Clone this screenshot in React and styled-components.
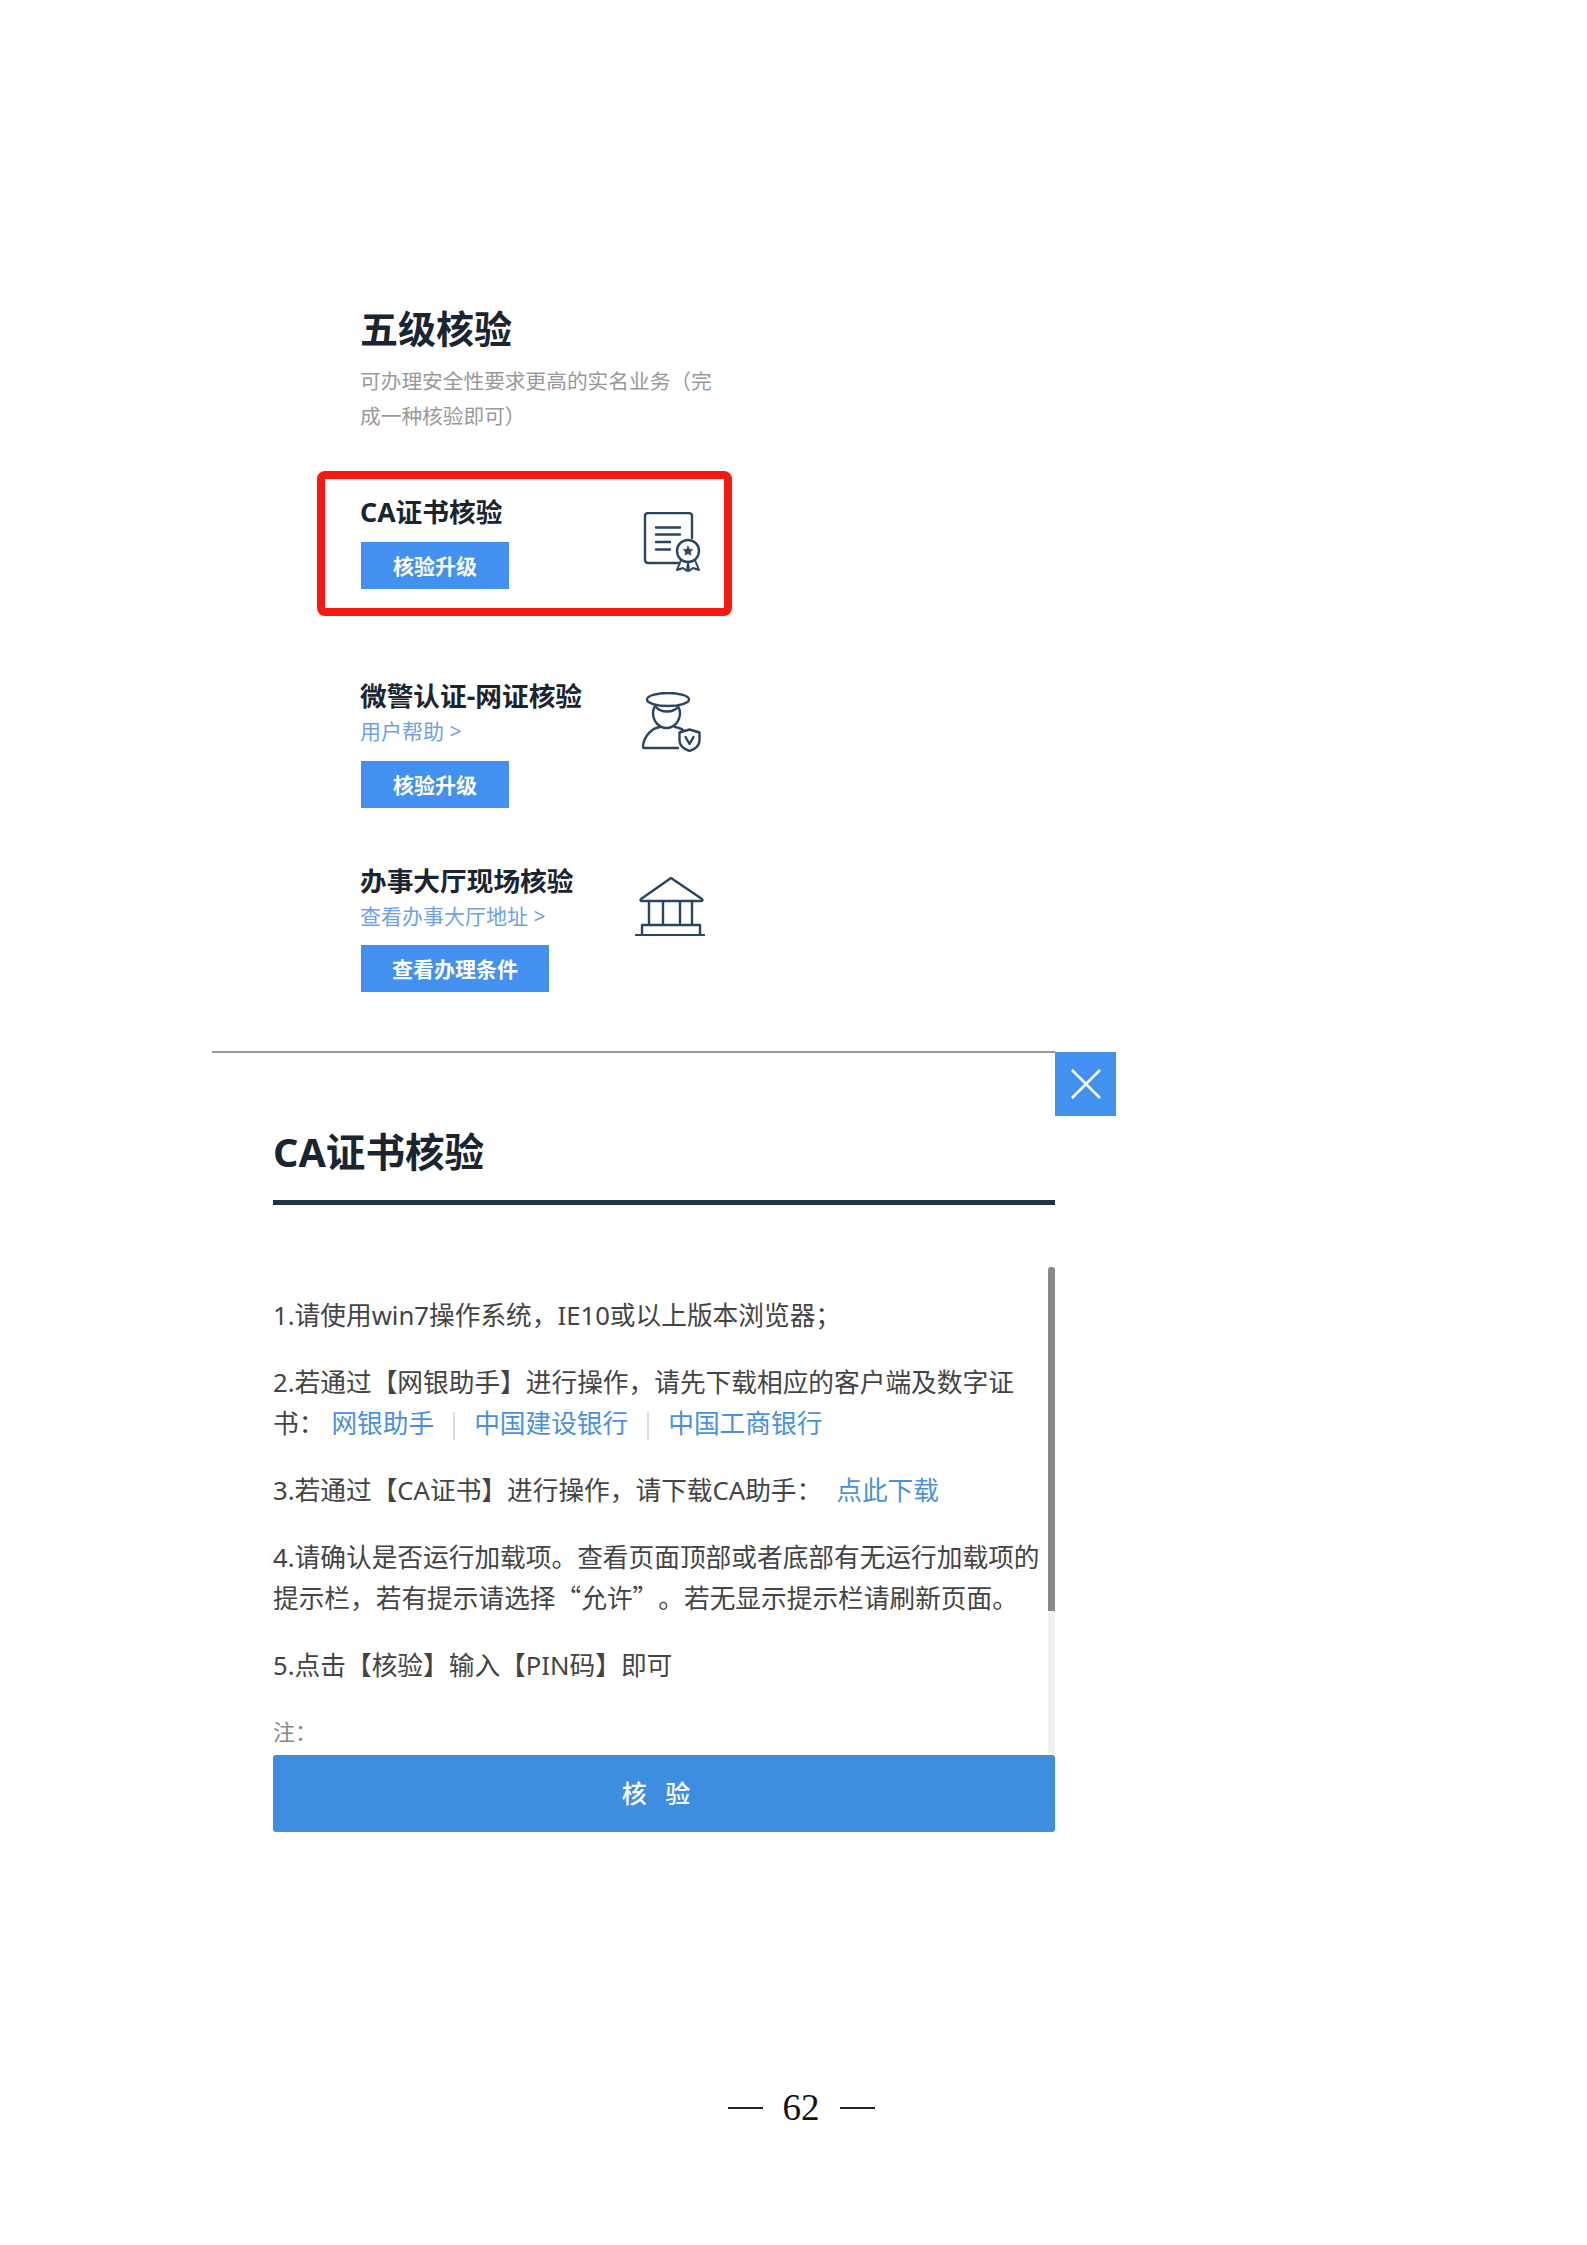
import React from 'react'
import styled, { createGlobalStyle } from 'styled-components'

const GlobalStyle = createGlobalStyle`
    html, body {
        margin: 0;
        padding: 0;
        background: #fff;
    }
    * {
        box-sizing: border-box;
    }
`

const Page = styled.div`
    width: 1587px;
    height: 2245px;
    overflow: hidden;
    background: #fff;
    padding-top: 305px;
    font-family: "Noto Sans", "Noto Sans CJK SC", sans-serif;
`

const Levels = styled.section`
    margin-left: 317px;
    width: 415px;
`

const LevelHeader = styled.header`
    padding-left: 43px;
`

const LevelTitle = styled.h1`
    margin: 0;
    font-size: 38px;
    line-height: 46px;
    font-weight: 700;
    color: #1a2530;
`

const LevelDesc = styled.p`
    margin: 13px 0 0;
    width: 358px;
    font-size: 20.7px;
    line-height: 35px;
    color: #999;
`

const CardList = styled.div`
    display: flex;
    flex-direction: column;
    gap: 55px;
    margin-top: 37px;
`

const Card = styled.div`
    display: flex;
    justify-content: space-between;
    align-items: flex-start;
    border: ${p => (p.$active ? '8px solid #f5190f' : 'none')};
    border-radius: ${p => (p.$active ? '8px' : '0')};
    padding: ${p => (p.$active ? '15px 19px 19px 36px' : '0 27px 0 44px')};
    margin-bottom: ${p => (p.$active ? '7px' : '0')};
`

const CardBody = styled.div`
    display: flex;
    flex-direction: column;
    align-items: flex-start;
`

const CardTitle = styled.h3`
    margin: 0 0 0 -1px;
    font-size: 26.7px;
    line-height: 36px;
    font-weight: 700;
    color: #1a2530;
`

const HelpLink = styled.a`
    margin: 2px 0 0 -1px;
    font-size: 21px;
    line-height: 30px;
    color: #6f9ff0;
`

const CardButton = styled.button`
    width: ${p => p.$width}px;
    height: 47px;
    margin-top: ${p => p.$top}px;
    padding: 0 0 2px;
    border: none;
    background: #4290ef;
    color: #fff;
    font-family: inherit;
    font-size: 21px;
    font-weight: 700;
`

const IconBox = styled.div`
    width: 70px;
    height: 60px;
    margin-top: ${p => p.$top}px;
    flex: none;
    svg {
        display: block;
        fill: none;
        stroke: #2a4562;
        stroke-width: 2.4;
        stroke-linecap: round;
        stroke-linejoin: round;
    }
`

const CertIcon = () => (
    <svg width="70" height="60" viewBox="0 0 70 60">
        <path d="M43 51H13a3 3 0 0 1-3-3V4a3 3 0 0 1 3-3h41a3 3 0 0 1 3 3v22" />
        <path d="M21 15.5H45M21 22.5H45M21 30H35M21 37.5H35" />
        <circle cx="53" cy="39" r="11" />
        <path d="M53 34l1.500 3.200 3.400.4-2.500 2.300.7 3.400-3.100-1.800-3.100 1.800.7-3.400-2.500-2.300 3.400-.4z" fill="#2a4562" strokeWidth="0.5" />
        <path d="M46 48l-4 10 6-2 4 3 1-8 1 8 4-3 6 2-4-10" strokeWidth="2" />
    </svg>
)

const PoliceIcon = () => (
    <svg width="70" height="60" viewBox="0 0 70 60">
        <ellipse cx="33" cy="7.5" rx="21" ry="6.5" />
        <path d="M20 14c-1 2-2 4-2 7a13.500 15 0 0 0 27 0c0-3-1-5-2-7" />
        <path d="M21 15c5 6 17 6 22 0" />
        <path d="M43 56H9c-1 0-1-1-1-2 1-10 9-18 17-19" />
        <path d="M40 35c3 .5 7 2 9 4" />
        <path d="M54.500 37.500l10 3v8c0 5.500-4 8.500-10 10.500-6-2-10-5-10-10.500v-8z" />
        <path d="M50.500 45l4 7 4-7" />
    </svg>
)

const BankIcon = () => (
    <svg width="70" height="60" viewBox="0 0 70 60">
        <path d="M36 2L6 23c-1 1-.5 2 1 2H66c1.500 0 2-1 1-2z" />
        <path d="M14 25V48M28 26V47M45 26V47M57 25V48" />
        <path d="M7 59V49H65V59" />
        <path d="M1 59.500H69" strokeWidth="2.800" />
    </svg>
)

const Modal = styled.section`
    position: relative;
    width: 843px;
    margin: 59px 0 0 212px;
    padding-left: 61px;
    border-top: 2px solid #999;
`

const CloseButton = styled.button`
    position: absolute;
    left: 100%;
    top: -1px;
    width: 61px;
    height: 64px;
    padding: 0;
    border: none;
    background: #4290ef;
    display: flex;
    align-items: center;
    justify-content: center;
`

const ModalTitle = styled.h2`
    margin: 0;
    padding: 74px 0 23px;
    border-bottom: 5px solid #1f3349;
    font-size: 39.6px;
    line-height: 50px;
    font-weight: 700;
    color: #1a2530;
`

const ScrollArea = styled.div`
    position: relative;
    height: 488px;
    margin-top: 62px;
    overflow: hidden;
`

const ScrollTrack = styled.div`
    position: absolute;
    top: 0;
    right: 0;
    bottom: 0;
    width: 7px;
    background: #f1f1f1;
`

const ScrollThumb = styled.div`
    height: ${p => p.$height}px;
    background: #888;
    border-radius: 3px 3px 0 0;
`

const ScrollContent = styled.div`
    padding: 28px 7px 0 0;
`

const Step = styled.p`
    margin: 0 0 26px;
    font-size: 25.7px;
    line-height: 41px;
    color: #444;
`

const StepLine = styled.span`
    display: block;
`

const Quoted = styled.span`
    font-family: "Noto Sans CJK SC", sans-serif;
    line-height: 1;
    text-spacing-trim: space-all;
`

const TextLink = styled.a`
    color: #4a90e2;
    margin-left: ${p => p.$left || 0}px;
`

const LinkSep = styled.span`
    display: inline-block;
    height: 28px;
    margin: 0 19px;
    border-left: 2px solid #ddd;
    vertical-align: middle;
`

const Note = styled.p`
    margin: 0;
    font-size: 22px;
    line-height: 38px;
    color: #888;
`

const VerifyButton = styled.button`
    display: block;
    width: 100%;
    height: 77px;
    padding: 0 10px 3px 0;
    border: none;
    border-radius: 3px;
    background: #3d8ee0;
    color: #fff;
    font-family: inherit;
    font-size: 25px;
    font-weight: 500;
    letter-spacing: 6px;
`

const Footer = styled.footer`
    display: flex;
    justify-content: center;
    align-items: center;
    gap: 20px;
    margin-top: 254px;
    padding-left: 15px;
    font-family: "Liberation Serif", serif;
    font-size: 37px;
    line-height: 44px;
    color: #111;
`

const Dash = styled.span`
    width: 35px;
    height: 2px;
    background: #222;
`

const App = () => {
    return (
        <Page>
            <GlobalStyle />
            <Levels>
                <LevelHeader>
                    <LevelTitle>五级核验</LevelTitle>
                    <LevelDesc>可办理安全性要求更高的实名业务（完成一种核验即可）</LevelDesc>
                </LevelHeader>
                <CardList>
                    <Card $active>
                        <CardBody>
                            <CardTitle>CA证书核验</CardTitle>
                            <CardButton $width={148} $top={12}>核验升级</CardButton>
                        </CardBody>
                        <IconBox $top={18}><CertIcon /></IconBox>
                    </Card>
                    <Card>
                        <CardBody>
                            <CardTitle>微警认证-网证核验</CardTitle>
                            <HelpLink>用户帮助 &gt;</HelpLink>
                            <CardButton $width={148} $top={15}>核验升级</CardButton>
                        </CardBody>
                        <IconBox $top={14}><PoliceIcon /></IconBox>
                    </Card>
                    <Card>
                        <CardBody>
                            <CardTitle>办事大厅现场核验</CardTitle>
                            <HelpLink>查看办事大厅地址 &gt;</HelpLink>
                            <CardButton $width={188} $top={14}>查看办理条件</CardButton>
                        </CardBody>
                        <IconBox $top={13}><BankIcon /></IconBox>
                    </Card>
                </CardList>
            </Levels>

            <Modal>
                <CloseButton>
                    <svg width="34" height="34" viewBox="0 0 34 34" fill="none" stroke="#fff" strokeWidth="2.5">
                        <path d="M3 3L31 31M31 3L3 31" />
                    </svg>
                </CloseButton>
                <ModalTitle>CA证书核验</ModalTitle>
                <ScrollArea>
                    <ScrollContent>
                        <Step>1.请使用win7操作系统，IE10或以上版本浏览器；</Step>
                        <Step>
                            <StepLine>2.若通过【网银助手】进行操作，请先下载相应的客户端及数字证</StepLine>
                            <StepLine>
                                书：
                                <TextLink $left={7}>网银助手</TextLink>
                                <LinkSep />
                                <TextLink>中国建设银行</TextLink>
                                <LinkSep />
                                <TextLink>中国工商银行</TextLink>
                            </StepLine>
                        </Step>
                        <Step>
                            3.若通过【CA证书】进行操作，请下载CA助手：
                            <TextLink $left={14}>点此下载</TextLink>
                        </Step>
                        <Step>
                            <StepLine>4.请确认是否运行加载项。查看页面顶部或者底部有无运行加载项的</StepLine>
                            <StepLine>提示栏，若有提示请选择<Quoted>“允许”。</Quoted>若无显示提示栏请刷新页面。</StepLine>
                        </Step>
                        <Step>5.点击【核验】输入【PIN码】即可</Step>
                        <Note>注：</Note>
                    </ScrollContent>
                    <ScrollTrack>
                        <ScrollThumb $height={344} />
                    </ScrollTrack>
                </ScrollArea>
                <VerifyButton>核 验</VerifyButton>
            </Modal>

            <Footer>
                <Dash />
                <span>62</span>
                <Dash />
            </Footer>
        </Page>
    )
}

export default App
